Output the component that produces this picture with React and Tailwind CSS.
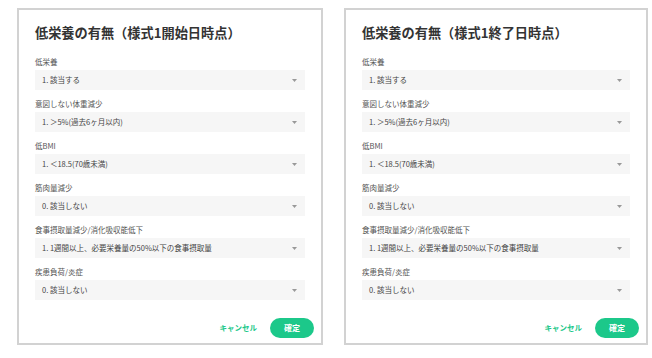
import React from 'react'

const fields = [
  { label: '低栄養', value: '1. 該当する' },
  { label: '意図しない体重減少', value: '1. ＞5%(過去6ヶ月以内)' },
  { label: '低BMI', value: '1. ＜18.5(70歳未満)' },
  { label: '筋肉量減少', value: '0. 該当しない' },
  { label: '食事摂取量減少/消化吸収能低下', value: '1. 1週間以上、必要栄養量の50%以下の食事摂取量' },
  { label: '疾患負荷/炎症', value: '0. 該当しない' },
]

function SelectField({ label, value }) {
  return (
    <div>
      <div className="text-[7.5px] leading-[12px] text-[#555]">{label}</div>
      <div className="mt-[2px] flex h-5 items-center justify-between bg-[#f6f6f6] pl-[7px] pr-[8px]">
        <span className="text-[7.5px] text-[#444]">{value}</span>
        <svg width="5" height="3" viewBox="0 0 5 3">
          <path d="M0 0h5L2.5 3z" fill="#999" />
        </svg>
      </div>
    </div>
  )
}

function Card({ title, width }) {
  return (
    <div className={`${width} border-2 border-[#d2d2d2] bg-white px-4 pt-[13px] pb-[5px]`}>
      <h2 className="text-[13.2px] font-bold leading-5 text-[#333]">{title}</h2>
      <div className="mt-[13px] flex flex-col gap-2">
        {fields.map((f) => (
          <SelectField key={f.label} label={f.label} value={f.value} />
        ))}
      </div>
      <div className="-mr-[9px] mt-[18px] flex items-center justify-end gap-[13px]">
        <button className="text-[7.5px] font-bold text-[#1cc88a]">キャンセル</button>
        <button className="h-5 w-11 rounded-full bg-[#1cc88a] text-[8px] font-bold text-white">確定</button>
      </div>
    </div>
  )
}

export default function App() {
  return (
    <div
      className="flex h-[358px] w-[652px] items-start gap-[21px] bg-white pl-[17px] pt-2"
      style={{ fontFamily: '"Noto Sans CJK JP", "Noto Sans", sans-serif' }}
    >
      <Card title="低栄養の有無（様式1開始日時点）" width="w-[306px]" />
      <Card title="低栄養の有無（様式1終了日時点）" width="w-[304px]" />
    </div>
  )
}
